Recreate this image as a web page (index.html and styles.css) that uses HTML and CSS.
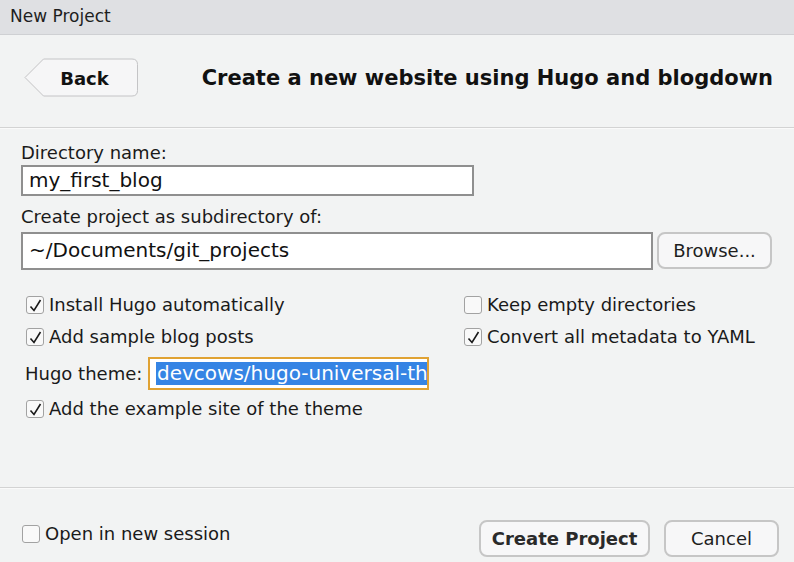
FILE: index.html
```html
<!DOCTYPE html>
<html>
<head>
<meta charset="utf-8">
<link rel="stylesheet" href="styles.css">
</head>
<body>
<div class="window">
  <div class="titlebar">New Project</div>
  <div class="header">
    <button class="back">
      <svg class="back-shape" width="115" height="40" viewBox="0 0 115 40">
        <path d="M1 19.5 L19.5 1 H108 Q113.5 1 113.5 6.5 V32.5 Q113.5 38 108 38 H19.5 Z" fill="#f6f6f7" stroke="#c4c4c6" stroke-width="1"/>
      </svg>
      <span class="back-label">Back</span>
    </button>
    <div class="heading">Create a new website using Hugo and blogdown</div>
  </div>
  <div class="rule"></div>
  <div class="form">
    <div class="label">Directory name:</div>
    <div class="input input-short">my_first_blog</div>
    <div class="label label-2">Create project as subdirectory of:</div>
    <div class="dir-row">
      <div class="input input-long">~/Documents/git_projects</div>
      <button class="btn browse">Browse...</button>
    </div>
    <div class="opts">
      <div class="opt-col">
        <label class="check"><span class="box on"><svg width="15" height="15" viewBox="0 0 15 15"><path d="M2.5 8.5 L6 12.5 L12.5 2" fill="none" stroke="#1a1a1a" stroke-width="1.6"/></svg></span>Install Hugo automatically</label>
        <label class="check"><span class="box on"><svg width="15" height="15" viewBox="0 0 15 15"><path d="M2.5 8.5 L6 12.5 L12.5 2" fill="none" stroke="#1a1a1a" stroke-width="1.6"/></svg></span>Add sample blog posts</label>
      </div>
      <div class="opt-col right">
        <label class="check"><span class="box"></span>Keep empty directories</label>
        <label class="check"><span class="box on"><svg width="15" height="15" viewBox="0 0 15 15"><path d="M2.5 8.5 L6 12.5 L12.5 2" fill="none" stroke="#1a1a1a" stroke-width="1.6"/></svg></span>Convert all metadata to YAML</label>
      </div>
    </div>
    <div class="theme-row">
      <span class="theme-label">Hugo theme:</span>
      <div class="theme-input"><span class="sel">devcows/hugo-universal-th</span></div>
    </div>
    <label class="check example"><span class="box on"><svg width="15" height="15" viewBox="0 0 15 15"><path d="M2.5 8.5 L6 12.5 L12.5 2" fill="none" stroke="#1a1a1a" stroke-width="1.6"/></svg></span>Add the example site of the theme</label>
  </div>
  <div class="rule"></div>
  <div class="footer">
    <label class="check session"><span class="box"></span>Open in new session</label>
    <div class="actions">
      <button class="btn create">Create Project</button>
      <button class="btn cancel">Cancel</button>
    </div>
  </div>
</div>
</body>
</html>
```
FILE: styles.css
```css
html, body {
  margin: 0;
  padding: 0;
  width: 794px;
  height: 562px;
  overflow: hidden;
  background: #f2f3f3;
  font-family: "DejaVu Sans", sans-serif;
  color: #1a1a1a;
}
.window {
  display: flex;
  flex-direction: column;
  height: 562px;
}
.titlebar {
  height: 35px;
  box-sizing: border-box;
  background: #dfe0e3;
  border-bottom: 1px solid #cfd0d3;
  font-size: 17px;
  line-height: 33px;
  padding-left: 10px;
  color: #1e1e1e;
}
.header {
  height: 92px;
  display: flex;
  align-items: center;
  justify-content: space-between;
  padding: 0 21px 0 24px;
  box-sizing: border-box;
}
.back {
  position: relative;
  width: 115px;
  height: 40px;
  padding: 0;
  border: none;
  background: transparent;
  font-family: inherit;
  margin-top: -6px;
  flex-shrink: 0;
}
.back-shape {
  position: absolute;
  left: 0;
  top: 0;
}
.back-label {
  position: relative;
  display: block;
  font-weight: bold;
  font-size: 18px;
  color: #111;
  padding-left: 6px;
}
.heading {
  font-weight: bold;
  font-size: 21px;
  color: #111;
  margin-top: -6px;
  white-space: nowrap;
}
.rule {
  height: 1px;
  background: #d3d3d3;
  border-bottom: 1px solid #fafafa;
}
.form {
  padding: 13px 21px 0 21px;
  flex: 1;
  display: flex;
  flex-direction: column;
}
.label {
  font-size: 18px;
  line-height: 22px;
  margin-bottom: 1px;
}
.label-2 {
  margin-top: 10px;
  margin-bottom: 4px;
}
.input {
  box-sizing: border-box;
  background: #fff;
  border: 2px solid #8f8f8f;
  font-size: 20px;
  padding-left: 6px;
  color: #111;
}
.input-short {
  width: 453px;
  height: 31px;
  line-height: 26px;
}
.dir-row {
  display: flex;
  align-items: flex-start;
  gap: 4px;
}
.input-long {
  width: 632px;
  height: 38px;
  line-height: 33px;
}
.btn {
  box-sizing: border-box;
  border: 2px solid #c6c6c6;
  border-radius: 8px;
  background: #f7f7f8;
  font-family: inherit;
  font-size: 18px;
  color: #1e1e1e;
  padding: 0;
}
.browse {
  width: 115px;
  height: 37px;
}
.opts {
  display: flex;
  margin-top: 25px;
  padding-left: 5px;
}
.opt-col {
  display: flex;
  flex-direction: column;
  gap: 12px;
  width: 438px;
  flex-shrink: 0;
}
.opt-col.right {
  width: auto;
  flex: 1;
  flex-shrink: 1;
}
.check {
  display: flex;
  align-items: center;
  font-size: 18px;
  line-height: 20px;
  height: 20px;
  gap: 5px;
  white-space: nowrap;
}
.box {
  box-sizing: border-box;
  width: 18px;
  height: 18px;
  border: 1.5px solid #a2a2a2;
  border-radius: 3px;
  background: #f9f9f9;
  display: flex;
  align-items: center;
  justify-content: center;
  flex-shrink: 0;
}
.box svg {
  display: block;
}
.theme-row {
  display: flex;
  align-items: center;
  margin-top: 10px;
  padding-left: 4px;
}
.theme-label {
  font-size: 18px;
  width: 123px;
}
.theme-input {
  box-sizing: border-box;
  width: 281px;
  height: 33px;
  border: 2px solid #e0a233;
  background: #fff;
  padding: 3px 0 3px 6px;
  display: flex;
  overflow: hidden;
}
.sel {
  background: #3584e4;
  color: #fff;
  font-size: 20px;
  line-height: 23px;
  white-space: nowrap;
  padding-left: 1px;
}
.example {
  margin-top: 9px;
  padding-left: 5px;
}
.footer {
  height: 73px;
  display: flex;
  align-items: center;
  justify-content: space-between;
  padding: 0 15px 0 22px;
  box-sizing: border-box;
}
.session {
  margin-top: 17px;
  gap: 5px;
}
.actions {
  display: flex;
  gap: 14px;
  margin-top: 25px;
}
.create {
  width: 171px;
  height: 37px;
  font-weight: bold;
  color: #2a2a2a;
}
.cancel {
  width: 115px;
  height: 37px;
}
```
